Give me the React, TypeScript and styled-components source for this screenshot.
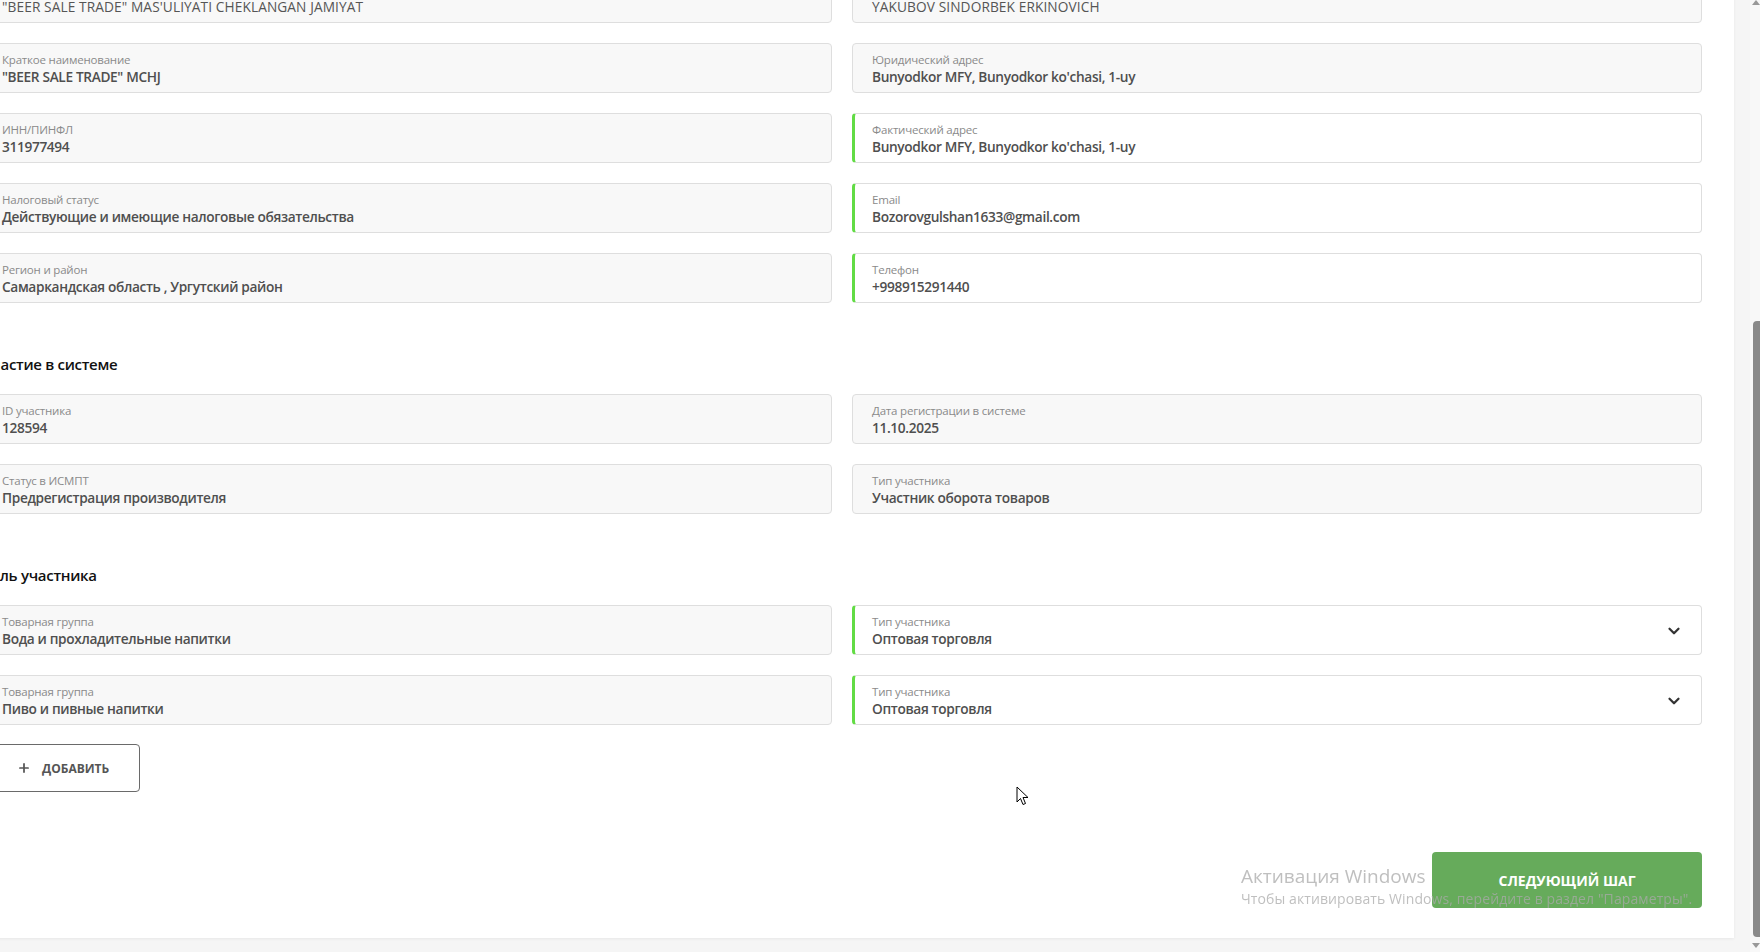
import styled, { createGlobalStyle } from "styled-components";
import { ChevronDown, Plus } from "lucide-react";

const GlobalStyle = createGlobalStyle`
    html, body {
        margin: 0;
        padding: 0;
        height: 100%;
        overflow: hidden;
    }
    body {
        font-family: "Open Sans", "Liberation Sans", sans-serif;
        background: #f5f5f5;
    }
`;

const Screen = styled.div`
    display: flex;
    width: 1760px;
    height: 952px;
    overflow: hidden;
`;

const Page = styled.div`
    flex: 1;
    min-width: 0;
    background: #f5f5f5;
    overflow: hidden;
`;

const Card = styled.div`
    margin: -27px 16px 0 -50px;
    padding: 0 32px 30px 32px;
    background: #ffffff;
    box-shadow: 0 1px 3px rgba(0, 0, 0, 0.06);
`;

const Grid = styled.div`
    display: grid;
    grid-template-columns: 1fr 1fr;
    column-gap: 20px;
    row-gap: 20px;
`;

const Heading = styled.h3`
    margin: 51px 0 20px;
    font-size: 15px;
    line-height: 20px;
    font-weight: 600;
    letter-spacing: -0.3px;
    color: #111;
`;

const Field = styled.div<{ $accent?: boolean }>`
    position: relative;
    box-sizing: border-box;
    height: 50px;
    padding: 8px 40px 0 ${(p) => (p.$accent ? "17px" : "19px")};
    border: 1px solid #dedede;
    border-left: ${(p) => (p.$accent ? "3px solid #62dc45" : "1px solid #dedede")};
    border-radius: 4px;
    background: ${(p) => (p.$accent ? "#ffffff" : "#f8f8f8")};
    display: flex;
    align-items: center;
`;

const FieldText = styled.div`
    flex: 1;
    min-width: 0;
    align-self: flex-start;
`;

const Label = styled.div`
    font-size: 11.5px;
    line-height: 16px;
    letter-spacing: -0.2px;
    color: #8a8a8a;
    white-space: nowrap;
`;

const Value = styled.div<{ $plain?: boolean }>`
    font-size: 13.7px;
    line-height: 18px;
    font-weight: ${(p) => (p.$plain ? 500 : 600)};
    color: ${(p) => (p.$plain ? "#555" : "#4f4f4f")};
    letter-spacing: ${(p) => (p.$plain ? "0.1px" : "-0.35px")};
    white-space: nowrap;
`;

const Chevron = styled.div`
    display: flex;
    margin-right: -22px;
    color: #333;
    margin-top: -6px;
`;

const AddButton = styled.button`
    margin-top: 19px;
    box-sizing: border-box;
    width: 158px;
    height: 48px;
    padding: 0 0 0 34px;
    display: flex;
    align-items: center;
    gap: 11px;
    background: #fff;
    border: 1px solid #6a6a6a;
    border-radius: 4px;
    font-family: "Open Sans", "Liberation Sans", sans-serif;
    font-size: 12px;
    font-weight: 700;
    color: #555;
    text-transform: uppercase;
    cursor: pointer;
`;

const Footer = styled.div`
    display: flex;
    justify-content: flex-end;
    margin-top: 60px;
`;

const NextButton = styled.button`
    width: 270px;
    height: 56px;
    border: 0;
    border-radius: 4px;
    background: #66ab5b;
    color: #fff;
    font-family: "Open Sans", "Liberation Sans", sans-serif;
    font-size: 14px;
    font-weight: 700;
    text-transform: uppercase;
    cursor: pointer;
`;

const ScrollTrack = styled.div`
    width: 10px;
    background: #f8f8f8;
    display: flex;
    flex-direction: column;
    align-items: flex-end;
`;

const Arrow = styled.div<{ $down?: boolean }>`
    width: 0;
    height: 0;
    margin: ${(p) => (p.$down ? "6px 0 0" : "0 0 0")};
    border-left: 4px solid transparent;
    border-right: 4px solid transparent;
    ${(p) => (p.$down ? "border-top: 5px solid #999;" : "border-bottom: 5px solid #999;")}
`;

const Thumb = styled.div`
    width: 7px;
    height: 616px;
    margin-top: 316px;
    background: #8a8a8a;
    border-radius: 4px 0 0 4px;
`;

const Watermark = styled.div`
    position: fixed;
    left: 1241px;
    top: 862px;
    color: rgba(170, 170, 170, 0.75);
    pointer-events: none;
`;

const WatermarkTitle = styled.div`
    font-size: 19px;
    line-height: 28px;
`;

const WatermarkText = styled.div`
    font-size: 14px;
    line-height: 18px;
    letter-spacing: 0.1px;
`;

const Cursor = styled.svg`
    position: fixed;
    left: 1016px;
    top: 786px;
`;

type Item = { label: string; value: string; accent?: boolean; select?: boolean; plain?: boolean };

const company: Item[] = [
    { label: "Полное наименование", value: "\"BEER SALE TRADE\" MAS'ULIYATI CHEKLANGAN JAMIYAT", plain: true },
    { label: "Руководитель", value: "YAKUBOV SINDORBEK ERKINOVICH", plain: true },
    { label: "Краткое наименование", value: "\"BEER SALE TRADE\" MCHJ" },
    { label: "Юридический адрес", value: "Bunyodkor MFY, Bunyodkor ko'chasi, 1-uy" },
    { label: "ИНН/ПИНФЛ", value: "311977494" },
    { label: "Фактический адрес", value: "Bunyodkor MFY, Bunyodkor ko'chasi, 1-uy", accent: true },
    { label: "Налоговый статус", value: "Действующие и имеющие налоговые обязательства" },
    { label: "Email", value: "Bozorovgulshan1633@gmail.com", accent: true },
    { label: "Регион и район", value: "Самаркандская область , Ургутский район" },
    { label: "Телефон", value: "+998915291440", accent: true },
];

const system: Item[] = [
    { label: "ID участника", value: "128594" },
    { label: "Дата регистрации в системе", value: "11.10.2025" },
    { label: "Статус в ИСМПТ", value: "Предрегистрация производителя" },
    { label: "Тип участника", value: "Участник оборота товаров" },
];

const roles: Item[] = [
    { label: "Товарная группа", value: "Вода и прохладительные напитки" },
    { label: "Тип участника", value: "Оптовая торговля", accent: true, select: true },
    { label: "Товарная группа", value: "Пиво и пивные напитки" },
    { label: "Тип участника", value: "Оптовая торговля", accent: true, select: true },
];

function FieldBox({ label, value, accent, select, plain }: Item) {
    return (
        <Field $accent={accent}>
            <FieldText>
                <Label>{label}</Label>
                <Value $plain={plain}>{value}</Value>
            </FieldText>
            {select && (
                <Chevron>
                    <ChevronDown size={18} strokeWidth={3} />
                </Chevron>
            )}
        </Field>
    );
}

export default function App() {
    return (
        <>
            <GlobalStyle />
            <Screen>
                <Page>
                    <Card>
                        <Grid>
                            {company.map((f, i) => (
                                <FieldBox key={i} {...f} />
                            ))}
                        </Grid>

                        <Heading>Участие в системе</Heading>
                        <Grid>
                            {system.map((f, i) => (
                                <FieldBox key={i} {...f} />
                            ))}
                        </Grid>

                        <Heading>Роль участника</Heading>
                        <Grid>
                            {roles.map((f, i) => (
                                <FieldBox key={i} {...f} />
                            ))}
                        </Grid>

                        <AddButton>
                            <Plus size={14} strokeWidth={3} />
                            Добавить
                        </AddButton>

                        <Footer>
                            <NextButton>Следующий шаг</NextButton>
                        </Footer>
                    </Card>
                </Page>
                <ScrollTrack>
                    <Arrow />
                    <Thumb />
                    <Arrow $down />
                </ScrollTrack>
            </Screen>

            <Watermark>
                <WatermarkTitle>Активация Windows</WatermarkTitle>
                <WatermarkText>Чтобы активировать Windows, перейдите в раздел "Параметры".</WatermarkText>
            </Watermark>

            <Cursor width="13" height="20" viewBox="0 0 13 20">
                <path d="M1 1 L1 16 L4.5 12.5 L7 18.5 L9.5 17.5 L7 11.5 L12 11.5 Z" fill="#fff" stroke="#000" strokeWidth="1" strokeLinejoin="round" />
            </Cursor>
        </>
    );
}
